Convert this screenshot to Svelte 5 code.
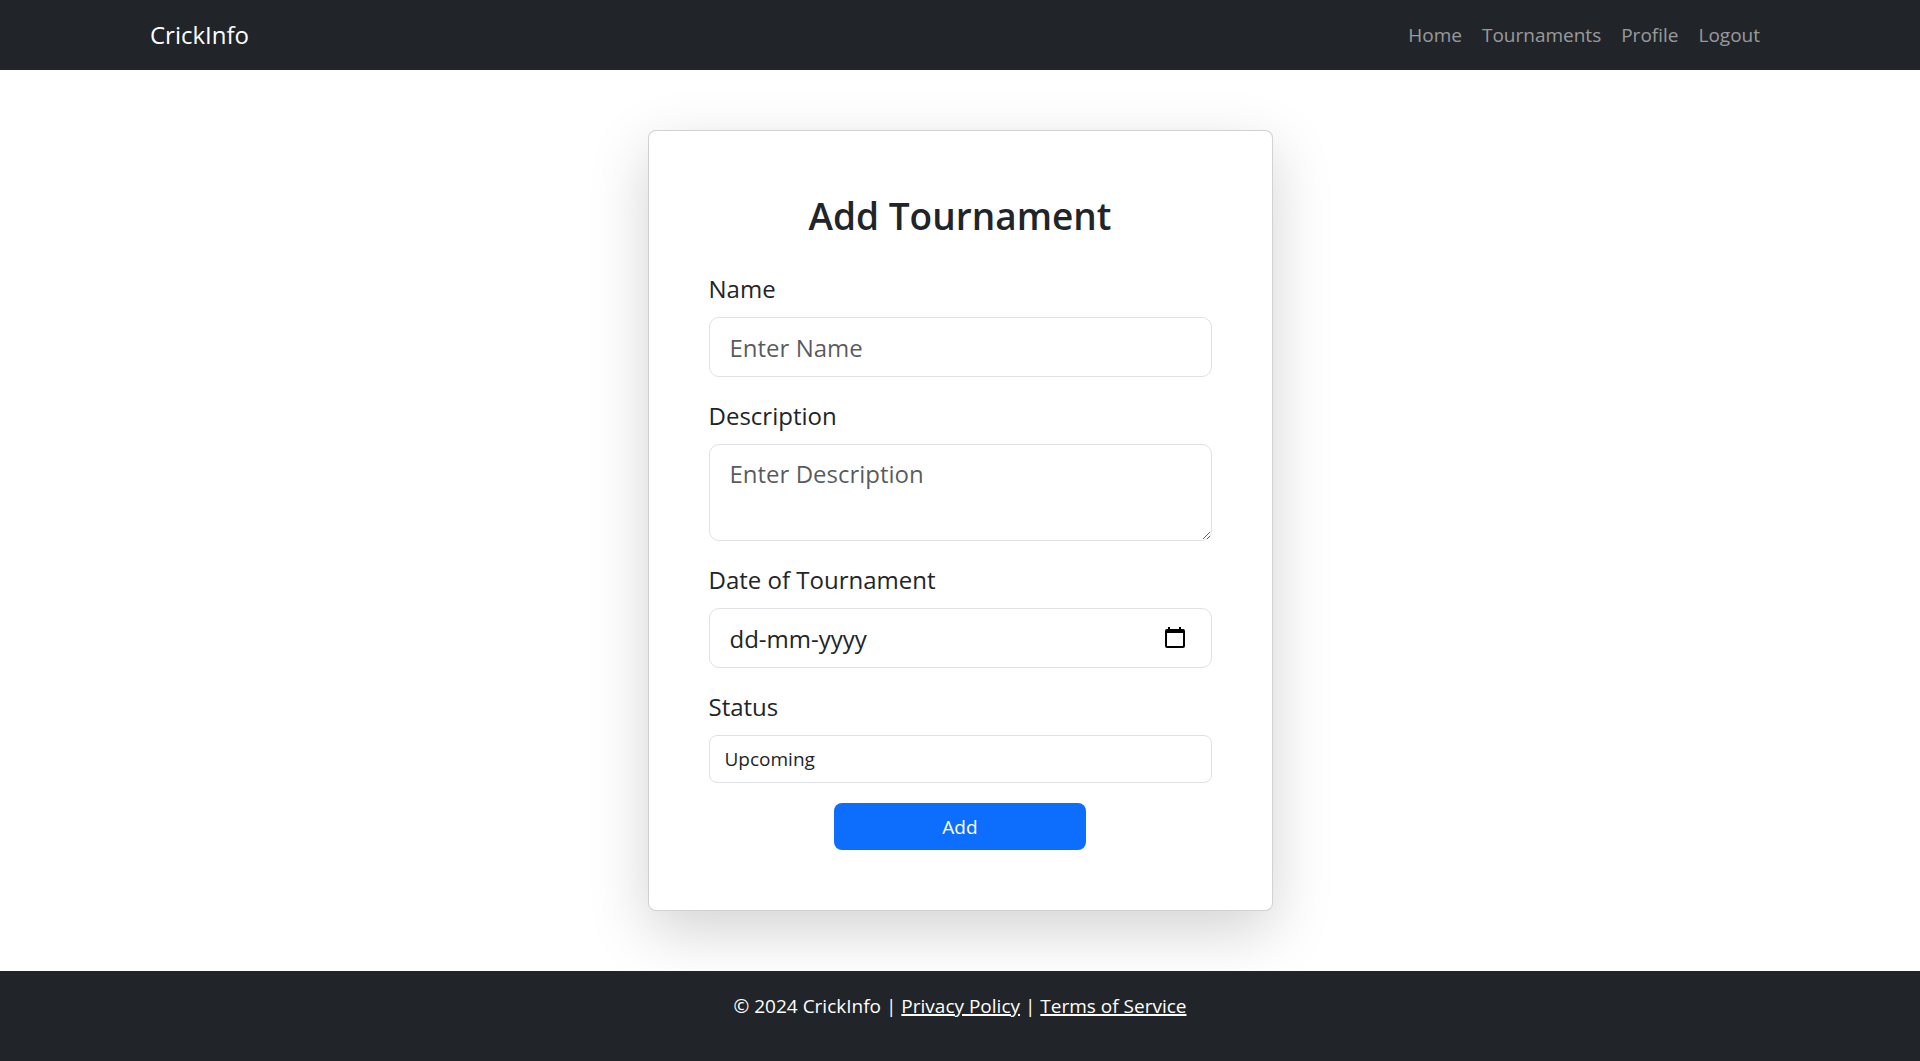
<script>
  const navLinks = ['Home', 'Tournaments', 'Profile', 'Logout'];
  let name = $state('');
  let description = $state('');
  let date = $state('');
  let status = $state('Upcoming');
</script>

<div class="page">
  <header class="navbar">
    <div class="container">
      <a class="brand" href="#home">CrickInfo</a>
      <nav>
        {#each navLinks as link}
          <a href={'#' + link.toLowerCase()}>{link}</a>
        {/each}
      </nav>
    </div>
  </header>

  <main>
    <form class="card" onsubmit={(event) => event.preventDefault()}>
      <h2>Add Tournament</h2>

      <div class="field">
        <label for="name">Name</label>
        <input id="name" class="control" type="text" placeholder="Enter Name" bind:value={name} />
      </div>

      <div class="field">
        <label for="description">Description</label>
        <textarea id="description" class="control" placeholder="Enter Description" bind:value={description}></textarea>
      </div>

      <div class="field">
        <label for="date">Date of Tournament</label>
        <div class="control date">
          <input id="date" type="text" inputmode="numeric" placeholder="dd-mm-yyyy" bind:value={date} />
          <button type="button" class="picker" aria-label="Show date picker">
            <svg viewBox="0 0 25 25" width="25" height="25" aria-hidden="true">
              <path d="M5 1h2v2h9V1h2v2h2q2 0 2 2v15q0 2-2 2H4q-2 0-2-2V5q0-2 2-2h1zM4 7v13h16V7z" fill-rule="evenodd" />
            </svg>
          </button>
        </div>
      </div>

      <div class="field">
        <label for="status">Status</label>
        <select id="status" bind:value={status}>
          <option>Upcoming</option>
          <option>Ongoing</option>
          <option>Completed</option>
        </select>
      </div>

      <button class="submit" type="submit">Add</button>
    </form>
  </main>

  <footer>
    <p>
      © 2024 CrickInfo | <a href="#privacy">Privacy Policy</a> | <a href="#terms">Terms of Service</a>
    </p>
  </footer>
</div>

<style>
  :global(body) {
    margin: 0;
    background: #fff;
  }

  .page {
    display: flex;
    flex-direction: column;
    min-height: 100vh;
    color: #212529;
    font-family: 'Open Sans', 'Noto Sans', sans-serif;
    font-size: 19px;
    line-height: 30px;
  }

  .page :is(input, textarea, select, button) {
    box-sizing: border-box;
    margin: 0;
    color: inherit;
    font-family: inherit;
  }

  .navbar {
    background: #212529;
  }

  .container {
    box-sizing: border-box;
    display: flex;
    align-items: center;
    justify-content: space-between;
    max-width: 1650px;
    min-height: 70px;
    margin: 0 auto;
    padding: 0 15px;
  }

  .brand {
    color: #fff;
    font-size: 24px;
    text-decoration: none;
  }

  nav {
    display: flex;
  }

  nav a {
    padding: 10px;
    color: rgba(255, 255, 255, 0.55);
    text-decoration: none;
  }

  main {
    flex: 1;
    padding: 60px 20px;
  }

  .card {
    box-sizing: border-box;
    display: flex;
    flex-direction: column;
    gap: 20px;
    max-width: 625px;
    margin: 0 auto;
    padding: 60px;
    border: 1px solid rgba(0, 0, 0, 0.175);
    border-radius: 8px;
    background: #fff;
    box-shadow: 0 20px 60px rgba(0, 0, 0, 0.175);
  }

  h2 {
    margin: 0 0 9px;
    font-size: 37px;
    font-weight: 600;
    line-height: 50px;
    text-align: center;
  }

  .field {
    display: flex;
    flex-direction: column;
    gap: 10px;
  }

  label {
    font-size: 24px;
    line-height: 37px;
  }

  .control {
    box-sizing: border-box;
    width: 100%;
    height: 60px;
    padding: 10px 20px;
    border: 1px solid #dee2e6;
    border-radius: 10px;
    background: #fff;
    font-size: 24px;
    line-height: 37px;
  }

  .control::placeholder {
    color: rgba(33, 37, 41, 0.75);
    opacity: 1;
  }

  textarea.control {
    display: block;
    height: 97px;
    resize: vertical;
  }

  .date {
    display: flex;
    align-items: center;
  }

  .date input {
    flex: 1;
    min-width: 0;
    padding: 0;
    border: 0;
    outline: 0;
    background: none;
    font-size: 24px;
    line-height: 37px;
  }

  .date input::placeholder {
    color: #212529;
    opacity: 1;
  }

  .picker {
    display: flex;
    padding: 0 3px;
    border: 0;
    background: none;
    cursor: pointer;
  }

  .picker svg {
    fill: #000;
  }

  select {
    height: 48px;
    padding: 0 15px;
    border: 1px solid #dee2e6;
    border-radius: 8px;
    background: #fff;
    font-size: 19px;
    appearance: none;
  }

  .submit {
    align-self: center;
    width: 50%;
    height: 47px;
    border: 0;
    border-radius: 8px;
    background: #0d6efd;
    font-size: 19px;
    cursor: pointer;
  }

  .page .submit {
    color: #fff;
  }

  footer {
    padding: 20px;
    background: #212529;
    color: #fff;
    text-align: center;
  }

  footer p {
    margin: 0 0 20px;
  }

  footer a {
    color: #fff;
    text-decoration-thickness: 2px;
  }
</style>
